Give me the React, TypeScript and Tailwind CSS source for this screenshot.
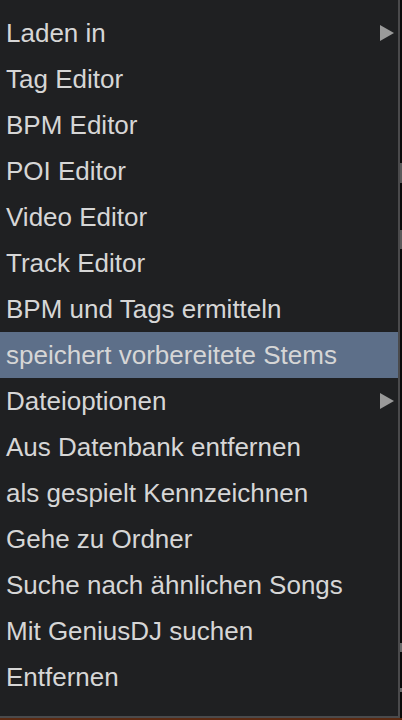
const items: { label: string; sub?: boolean; active?: boolean }[] = [
  { label: 'Laden in', sub: true },
  { label: 'Tag Editor' },
  { label: 'BPM Editor' },
  { label: 'POI Editor' },
  { label: 'Video Editor' },
  { label: 'Track Editor' },
  { label: 'BPM und Tags ermitteln' },
  { label: 'speichert vorbereitete Stems', active: true },
  { label: 'Dateioptionen', sub: true },
  { label: 'Aus Datenbank entfernen' },
  { label: 'als gespielt Kennzeichnen' },
  { label: 'Gehe zu Ordner' },
  { label: 'Suche nach ähnlichen Songs' },
  { label: 'Mit GeniusDJ suchen' },
  { label: 'Entfernen' },
]

export default function App() {
  return (
    <div className="relative w-[402px] h-[720px] overflow-hidden bg-[#0a0a0a]" style={{ fontFamily: '"Liberation Sans", Arial, sans-serif' }}>
      {/* stuff behind the menu, peeking out on the right */}
      <div className="absolute right-0 top-[163px] w-[2px] h-[20px] bg-[#5a5a5a]" />
      <div className="absolute right-0 top-[230px] w-[2px] h-[19px] bg-[#5a5a5a]" />
      <div className="absolute right-0 top-[643px] w-[2px] h-[9px] bg-[#6a6a6a]" />
      <div className="absolute right-0 top-[688px] w-[2px] h-[4px] bg-[#6a6a6a]" />

      <div className="flex flex-col w-[400px] h-[718px] bg-[#1f2022] border-r-2 border-b-2 border-[#4a4a4c] pt-[10px]">
        {items.map((item) => (
          <div
            key={item.label}
            className={`flex items-center justify-between h-[46px] pl-[6px] pr-[4px] text-[26px] text-[#d6d6d6] ${item.active ? 'bg-[#5d6f89]' : ''}`}
          >
            <span className="mt-[1px]">{item.label}</span>
            {item.sub && (
              <svg width="14" height="16" viewBox="0 0 14 16">
                <path d="M0 0 L14 8 L0 16 Z" fill="#9a9a9a" />
              </svg>
            )}
          </div>
        ))}
      </div>
      <div className="h-[2px] bg-[#5b2a12]" />
    </div>
  )
}
